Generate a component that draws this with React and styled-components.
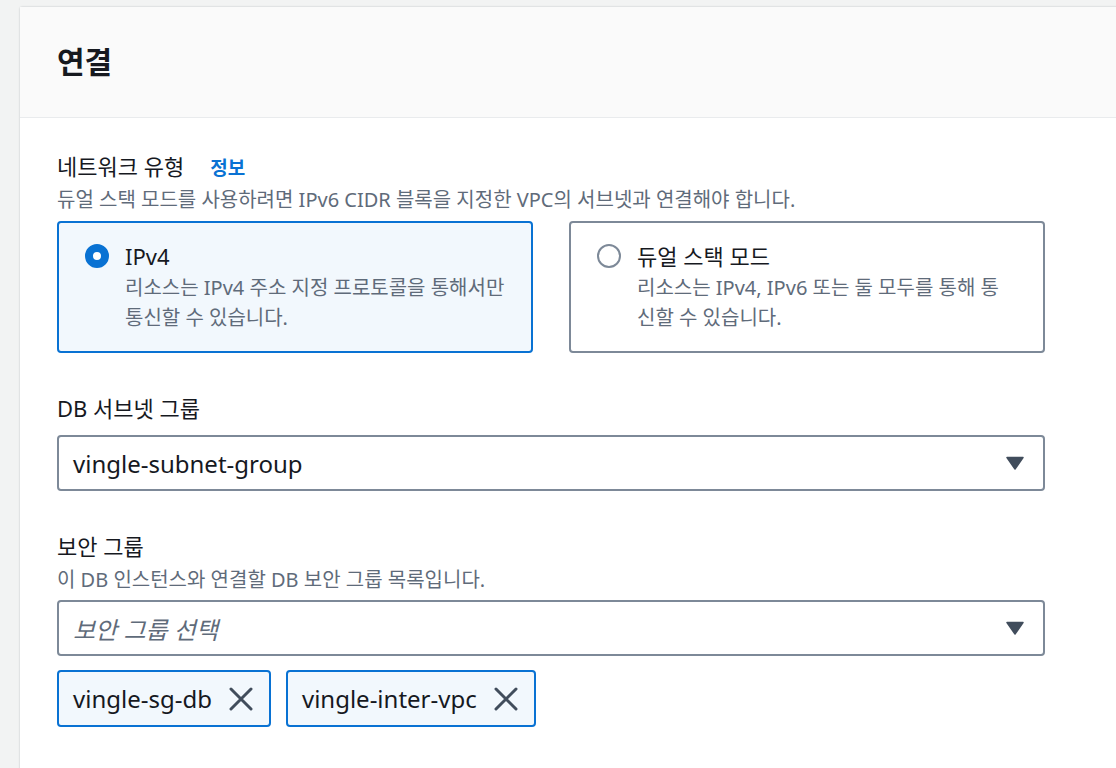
import React, { useState } from "react";
import styled, { createGlobalStyle } from "styled-components";

const GlobalStyle = createGlobalStyle`
  body {
    margin: 0;
    background: #f2f3f3;
    font-family: "Noto Sans", "Noto Sans CJK KR", sans-serif;
    color: #16191f;
  }
`;

const Page = styled.div`
  padding: 7px 0 0 20px;
  overflow: hidden;
  height: 761px;
`;

const Card = styled.section`
  width: 1130px;
  min-height: 770px;
  background: #ffffff;
  box-shadow: 0 0 2px rgba(0, 28, 36, 0.25);
  border-top-left-radius: 2px;
`;

const CardHeader = styled.header`
  height: 111px;
  box-sizing: border-box;
  display: flex;
  align-items: center;
  padding: 0 37px;
  background: #fafafa;
  border-bottom: 1px solid #e9ebed;
`;

const Title = styled.h2`
  margin: 0;
  font-size: 30px;
  font-weight: 700;
  line-height: 38px;
  color: #16191f;
`;

const Body = styled.div`
  width: 988px;
  padding: 32px 37px 0;
  display: flex;
  flex-direction: column;
`;

const Field = styled.div`
  display: flex;
  flex-direction: column;
  margin-top: ${props => props.$top || 0}px;
`;

const LabelRow = styled.div`
  display: flex;
  align-items: baseline;
  gap: 26px;
`;

const Label = styled.label`
  font-size: 22px;
  line-height: 32px;
  color: #16191f;
`;

const InfoLink = styled.a`
  font-size: 19px;
  font-weight: 700;
  color: #0972d3;
  text-decoration: none;
`;

const Description = styled.p`
  margin: 4px 0 0;
  font-size: 20px;
  line-height: 28px;
  color: #5f6b7a;
`;

const TileGrid = styled.div`
  display: grid;
  grid-template-columns: 1fr 1fr;
  gap: 36px;
  margin-top: 7px;
`;

const Tile = styled.div`
  display: flex;
  gap: 16px;
  box-sizing: border-box;
  height: 132px;
  padding: 17px 20px 0 26px;
  border: 2px solid ${props => (props.$selected ? "#0972d3" : "#7d8998")};
  border-radius: 4px;
  background: ${props => (props.$selected ? "#f2f8fd" : "#ffffff")};
  cursor: pointer;
`;

const Radio = styled.span`
  flex: none;
  width: 24px;
  height: 24px;
  margin-top: 4px;
  box-sizing: border-box;
  border-radius: 50%;
  border: ${props => (props.$checked ? "8px solid #0972d3" : "2px solid #7d8998")};
  background: #ffffff;
`;

const TileText = styled.div`
  display: flex;
  flex-direction: column;
`;

const TileTitle = styled.span`
  font-size: 22px;
  line-height: 32px;
  color: #16191f;
`;

const TileDesc = styled.span`
  font-size: 20px;
  line-height: 30px;
  color: #5f6b7a;
  margin-top: 1px;
  white-space: pre-line;
`;

const Select = styled.div`
  display: flex;
  align-items: center;
  justify-content: space-between;
  box-sizing: border-box;
  height: 56px;
  margin-top: ${props => props.$top || 10}px;
  padding: 0 19px 0 14px;
  border: 2px solid #7d8998;
  border-radius: 4px;
  background: #ffffff;
  cursor: pointer;
`;

const SelectValue = styled.span`
  font-size: 24px;
  color: ${props => (props.$placeholder ? "#5f6b7a" : "#16191f")};
  font-style: ${props => (props.$placeholder ? "italic" : "normal")};
`;

const TokenList = styled.div`
  display: flex;
  gap: 15px;
  margin-top: 14px;
`;

const Token = styled.div`
  display: flex;
  align-items: center;
  gap: 17px;
  box-sizing: border-box;
  height: 57px;
  padding: 0 16px 0 14px;
  border: 2px solid #0972d3;
  border-radius: 4px;
  background: #f2f8fd;
`;

const TokenLabel = styled.span`
  font-size: 24px;
  color: #16191f;
`;

const DismissButton = styled.button`
  display: flex;
  padding: 0;
  border: none;
  background: none;
  cursor: pointer;
`;

const Caret = () => (
  <svg width="18" height="14" viewBox="0 0 18 14">
    <path d="M1 1.5h16L9 13z" fill="#414d5c" stroke="#414d5c" strokeWidth="1.5" strokeLinejoin="round" />
  </svg>
);

const CloseIcon = () => (
  <svg width="24" height="24" viewBox="0 0 24 24">
    <path d="M2 2l20 20M22 2L2 22" stroke="#414d5c" strokeWidth="3" strokeLinecap="round" />
  </svg>
);

const networkOptions = [
  {
    id: "ipv4",
    title: "IPv4",
    desc: "리소스는 IPv4 주소 지정 프로토콜을 통해서만\n통신할 수 있습니다.",
  },
  {
    id: "dual",
    title: "듀얼 스택 모드",
    desc: "리소스는 IPv4, IPv6 또는 둘 모두를 통해 통\n신할 수 있습니다.",
  },
];

export default function App() {
  const [network, setNetwork] = useState("ipv4");
  const [groups, setGroups] = useState(["vingle-sg-db", "vingle-inter-vpc"]);

  return (
    <>
      <GlobalStyle />
      <Page>
        <Card>
          <CardHeader>
            <Title>연결</Title>
          </CardHeader>
          <Body>
            <Field>
              <LabelRow>
                <Label>네트워크 유형</Label>
                <InfoLink href="#">정보</InfoLink>
              </LabelRow>
              <Description>
                듀얼 스택 모드를 사용하려면 IPv6 CIDR 블록을 지정한 VPC의 서브넷과 연결해야 합니다.
              </Description>
              <TileGrid>
                {networkOptions.map(opt => (
                  <Tile
                    key={opt.id}
                    $selected={network === opt.id}
                    onClick={() => setNetwork(opt.id)}
                  >
                    <Radio $checked={network === opt.id} />
                    <TileText>
                      <TileTitle>{opt.title}</TileTitle>
                      <TileDesc>{opt.desc}</TileDesc>
                    </TileText>
                  </Tile>
                ))}
              </TileGrid>
            </Field>

            <Field $top={39}>
              <Label>DB 서브넷 그룹</Label>
              <Select $top={11}>
                <SelectValue>vingle-subnet-group</SelectValue>
                <Caret />
              </Select>
            </Field>

            <Field $top={39}>
              <Label>보안 그룹</Label>
              <Description>이 DB 인스턴스와 연결할 DB 보안 그룹 목록입니다.</Description>
              <Select $top={6}>
                <SelectValue $placeholder>보안 그룹 선택</SelectValue>
                <Caret />
              </Select>
              <TokenList>
                {groups.map(g => (
                  <Token key={g}>
                    <TokenLabel>{g}</TokenLabel>
                    <DismissButton onClick={() => setGroups(groups.filter(x => x !== g))}>
                      <CloseIcon />
                    </DismissButton>
                  </Token>
                ))}
              </TokenList>
            </Field>
          </Body>
        </Card>
      </Page>
    </>
  );
}
